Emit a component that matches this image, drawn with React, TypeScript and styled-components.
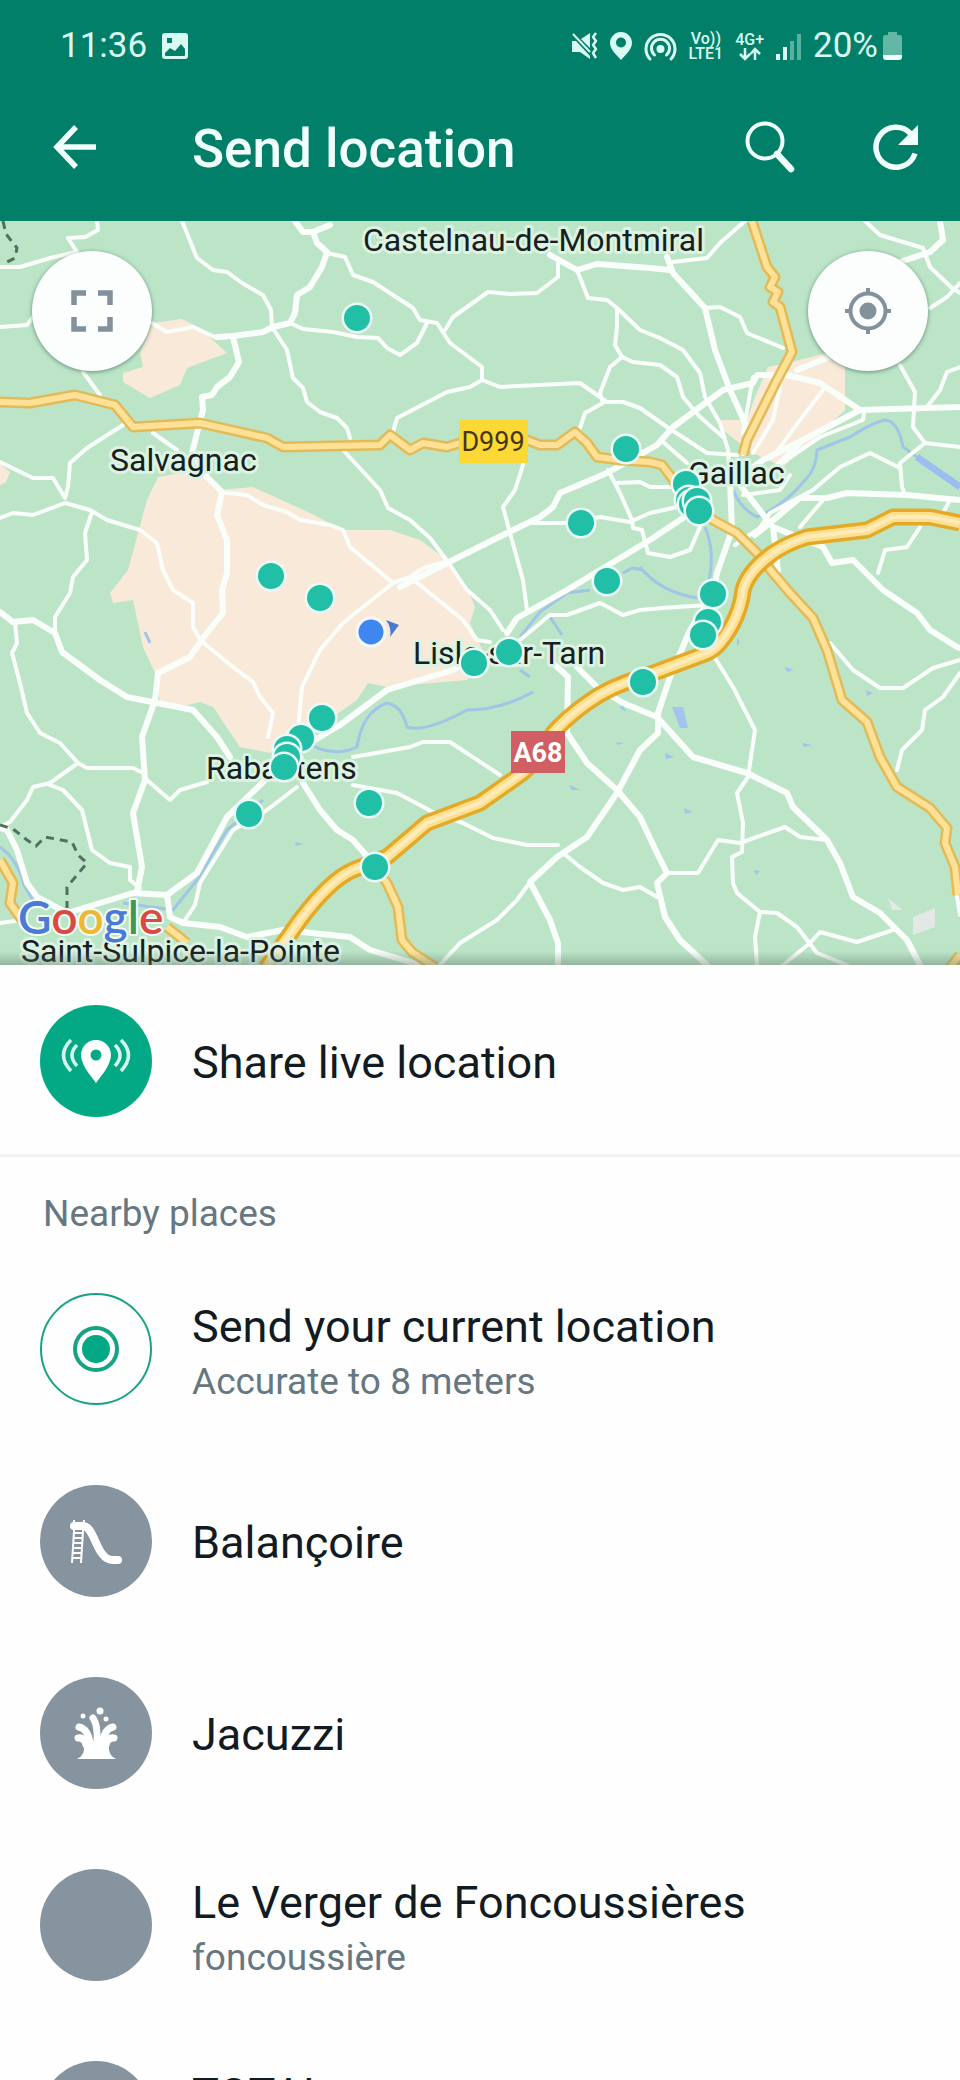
import React from "react";
import styled, { createGlobalStyle, css } from "styled-components";

const GlobalStyle = createGlobalStyle`
  * { box-sizing: border-box; }
  body {
    margin: 0;
    background: #fefefe;
    font-family: Roboto, "Liberation Sans", sans-serif;
  }
  svg { display: block; }
`;

const Screen = styled.div`
  display: flex;
  flex-direction: column;
  height: 100vh;
  overflow: hidden;
`;

/* ---------- header ---------- */

const Header = styled.header`
  flex: none;
  background: #027f69;
  color: #f0fffb;
`;

const StatusBar = styled.div`
  display: flex;
  align-items: center;
  justify-content: space-between;
  height: 92px;
  padding: 0 58px 0 60px;
  color: #d9faf2;
`;

const StatusGroup = styled.div<{ $gap: number }>`
  display: flex;
  align-items: center;
  gap: ${(p) => p.$gap}px;
`;

const StatusText = styled.span`
  font-size: 35px;
  line-height: 44px;
`;

const BatteryGroup = styled.div`
  display: flex;
  align-items: center;
  gap: 5px;
`;

const NetworkLabel = styled.span`
  display: flex;
  flex-direction: column;
  align-items: center;
  font-size: 16px;
  line-height: 15px;
  font-weight: 500;
`;

const AppBar = styled.div`
  display: flex;
  align-items: center;
  height: 129px;
  padding: 0 36px 20px 46px;
`;

const IconButton = styled.button`
  display: flex;
  align-items: center;
  justify-content: center;
  width: 58px;
  height: 58px;
  padding: 0;
  border: 0;
  background: none;
  color: inherit;
`;

const Title = styled.h1`
  flex: 1;
  margin: 0 0 0 88px;
  padding-top: 4px;
  font-size: 53px;
  line-height: 60px;
  font-weight: 500;
`;

const Actions = styled.div`
  display: flex;
  gap: 68px;
`;

/* ---------- map ---------- */

const MapArea = styled.section`
  position: relative;
  flex: none;
  height: 744px;
  overflow: hidden;
  background: #bce5c8;
`;

const MapCanvas = styled.svg`
  width: 100%;
  height: 100%;
`;

const MapButton = styled.button<{ $side: "left" | "right" }>`
  position: absolute;
  top: 30px;
  ${(p) =>
    p.$side === "left"
      ? css`
          left: 32px;
        `
      : css`
          right: 32px;
        `}
  display: flex;
  align-items: center;
  justify-content: center;
  width: 120px;
  height: 120px;
  padding: 0;
  border: 0;
  border-radius: 50%;
  background: #fbfefd;
  box-shadow: 0 1px 4px rgba(40, 80, 60, 0.6);
  color: #83919c;
`;

const MapLabel = styled.text`
  font-size: 32px;
  fill: #16201d;
  stroke: #dcf2e2;
  stroke-width: 6px;
  stroke-linejoin: round;
  paint-order: stroke;
`;

const ShieldText = styled.text`
  font-size: 27px;
  text-anchor: middle;
`;

const LogoText = styled.text`
  font-family: Lato, sans-serif;
  font-size: 46px;
  font-weight: 600;
  stroke: #f4fbf6;
  stroke-width: 4px;
  stroke-linejoin: round;
  paint-order: stroke;
`;

/* ---------- list ---------- */

const Content = styled.main`
  flex: 1;
  min-height: 0;
  overflow-y: auto;
  scrollbar-width: none;
`;

const PlaceList = styled.ul`
  margin: 0;
  padding: 0;
  list-style: none;
`;

const RowButton = styled.button<{ $divider?: boolean }>`
  display: flex;
  align-items: center;
  gap: 40px;
  width: 100%;
  height: 192px;
  padding: 0 40px;
  border: 0;
  background: none;
  box-shadow: ${(p) => (p.$divider ? "inset 0 -3px #f1f3f3" : "none")};
  font-family: inherit;
  text-align: left;
`;

const Avatar = styled.span<{ $tone: "live" | "current" | "place" }>`
  flex: none;
  width: 112px;
  height: 112px;
  border-radius: 50%;
  background: ${(p) =>
    p.$tone === "live" ? "#03a884" : p.$tone === "place" ? "#8694a0" : "none"};
  color: #fff;
`;

const RowText = styled.span`
  display: flex;
  flex-direction: column;
  padding-top: 3px;
`;

const Name = styled.span`
  font-size: 45px;
  line-height: 62px;
  color: #111b21;
`;

const Detail = styled.span`
  min-height: 48px;
  font-size: 37px;
  line-height: 48px;
  color: #667781;
`;

const SectionTitle = styled.h2`
  margin: 0;
  padding: 33px 43px 15px;
  font-size: 37px;
  line-height: 48px;
  font-weight: 400;
  color: #667781;
`;

/* ---------- map data ---------- */

const minorRoads = [
  "M182 221L197 258L213 270L227 272L242 283L263 295L271 310L272 327L287 350L293 378L303 388L307 402L320 412L337 418L347 428L350 438",
  "M0 267L20 267L50 258L77 252L68 238L85 237L98 230L97 221",
  "M0 327L27 325L33 317M152 323L167 332L193 327L217 338M83 372L100 395",
  "M290 323L303 329L333 332L357 337L378 338L387 348L400 355L417 343L427 323",
  "M123 425L87 448L70 463L68 487L65 498L53 478L33 478L0 462",
  "M0 518L13 513L33 515L65 503L90 510L107 520L140 530L157 543L163 570L173 590L193 603L193 627L200 640",
  "M92 512L85 533L87 560L73 577L70 593L55 617L55 633",
  "M153 433L177 450M227 493L247 495L263 505L287 512L300 520L330 525L343 530L350 547L393 583L343 623L320 650L302 687L298 730",
  "M393 583L410 577L463 620L477 640L490 642M410 577L423 568L453 560",
  "M320 245L327 253L345 257L353 275L373 282L413 308L420 320L437 323L450 343L482 367L482 380L470 387L447 392L397 418L393 432",
  "M482 380L500 387L580 383L607 402L623 402L640 408L667 427L707 453L737 455",
  "M445 330L453 317L488 292L510 294L537 293L558 277L558 262",
  "M577 270L583 285L588 298L607 300L617 308L617 327L615 345L622 357L610 367L600 393L603 403L585 413L580 428",
  "M617 308L640 330L660 338L683 350L700 373L705 397L720 423L728 450L730 480",
  "M622 357L633 362L660 365L677 377L683 397L700 417L723 437",
  "M343 450L380 490L388 508L410 520L430 538L448 562L467 590L490 610L503 630",
  "M523 465L515 490L503 507L510 533L523 580L527 610",
  "M533 523L567 523L600 517L630 522L650 513L677 507",
  "M608 470L620 493L632 520L633 528L642 530L648 553L670 557L690 550L700 527M617 483L640 482L650 487L673 487",
  "M745 221L720 243L707 258L673 262M705 308L720 307L740 317L747 333L783 348",
  "M865 221L880 235L923 248L930 267L952 288L960 293M960 283L947 297L930 308",
  "M900 365L915 392L913 427L925 443L960 447M960 367L947 372L940 390L927 407",
  "M925 443L900 463L902 487L905 495M900 468L870 453L840 467L813 490L770 513L755 535",
  "M823 500L800 527M864 412L863 420L820 437L783 462M753 377L743 433M780 387L773 420L753 453M823 390L800 420L778 450M663 442L687 463",
  "M920 527L907 547L885 550L878 573M950 500L943 513M735 545L757 530L775 520L785 510M743 495L780 490L790 475",
  "M15 623L17 643L12 653L20 683L27 713L40 733L60 743L78 763L87 768L133 768L143 773",
  "M78 763L50 783L33 787L27 800L10 822L0 827M50 785L63 790L82 810L92 850L110 863L130 867L130 880L140 888",
  "M147 780L170 800L180 790L207 782M200 640L233 667L253 682L260 697L273 713L268 737",
  "M297 787L267 810L233 830L200 883L195 905L183 923M0 923L22 920",
  "M353 785L397 793L433 812L463 823L493 838L527 845L558 845M353 757L410 747L423 742L450 742L500 775",
  "M520 640L550 615L567 615L600 603L623 615L640 610L663 608L707 605",
  "M530 882L517 900L497 920L460 943L447 957L440 965M563 853L580 867L603 883L623 890L640 887L657 897",
  "M715 658L733 687L755 730L748 777L737 793L743 823L742 852L732 857L733 883L737 893L760 912L755 937L757 965",
  "M667 873L698 873L718 840L740 843L785 827L800 837L827 840",
  "M760 912L777 913L797 927L817 953L847 965M783 965L810 943L820 932L857 942L893 930",
  "M830 643L853 670L880 688L903 688L933 668L960 660M960 673L943 697L925 710L922 730L902 750L897 770M957 897L960 915",
];

const mainRoads = [
  "M295 221L303 232L313 232L330 225M313 232L317 243L327 252L322 267L310 287L297 295L295 313L290 323L273 327L263 332L233 336L217 337",
  "M233 337L239 362L230 377L217 387L212 395L202 397L203 410L197 433L192 453L207 477L222 492L217 515L227 540L227 573L222 590L223 613L203 638L190 657L158 673L155 700L142 737L145 780L133 813L142 867L137 892",
  "M400 587L453 560L507 533L540 517L553 507L560 493L607 473L657 445L673 427L723 390L753 383L757 375L787 375L820 383L860 410L960 407",
  "M550 255L577 270L597 264L650 268L670 270M667 257L673 273L705 308L715 350L730 390L747 427L743 453",
  "M940 221L943 240L930 252L900 262M797 370L827 358L850 345",
  "M507 633L517 618L567 590L650 540L683 518",
  "M860 410L803 440L763 460L743 475M803 440L778 465M730 480L732 530L717 573L713 594L690 630L670 677L658 713L658 733L640 750L617 793L587 837L557 857L530 882L550 920L558 943L558 965",
  "M740 485L773 527L823 547L832 563L853 560L883 590L917 613L930 630L957 647L960 648M773 527L778 570M755 535L800 498L827 498L847 493L907 495L960 500",
  "M0 612L13 622L33 620L55 633L62 652L100 680L127 697L157 703L193 710L217 737L230 757",
  "M0 828L7 830L17 850L27 883L37 897L67 913L133 893L167 895L197 873L227 817L260 785L290 755L340 725L387 690L453 670L480 655",
  "M167 895L170 917L183 923L220 927L247 937L283 930L350 937L370 950L420 965",
  "M303 783L320 810L337 830L353 840L372 862",
  "M553 663L568 677L567 733L587 763L617 790L640 817L657 853L667 873L657 883L665 917L680 940L707 965",
  "M577 667L597 687L623 703L657 717L693 757L747 773L787 793L793 807L827 840L840 863L853 897L880 913L907 940L920 965",
];

const departmentRoads = [
  "M0 402L30 403L75 395L115 405L133 427L200 423L267 438L283 447L380 445L390 435L410 450L423 443L447 447L460 443L527 440L540 445L557 445L575 432L587 443L597 457L620 460L650 462L662 465L672 478L682 497L713 520L737 533L757 553L773 573L790 593L813 618L827 650L842 700L867 722L880 757L897 787L930 808L947 828L945 843L955 867L958 895",
  "M752 221L767 267L775 277L770 287L778 292L773 302L780 307L792 352L777 380L747 440L743 455",
  "M375 867L387 883L398 907L402 940L412 952L435 967",
  "M0 860L13 883L10 903L22 920",
  "M167 927L187 943M948 970L960 955",
];

const motorway =
  "M960 523L930 517L893 517L867 530L807 537Q788 543 773 553Q748 571 743 590Q740 618 720 643Q714 650 707 653L643 677Q610 686 587 703Q566 718 553 733Q538 763 517 777L480 803L427 823L387 857L353 870Q330 880 300 920L266 968";

const rivers = [
  "M960 487L917 457L903 447Q898 420 884 420Q870 424 850 437L817 450Q816 470 805 480Q785 505 757 517Q740 508 733 490",
  "M705 527Q716 553 708 585M640 567Q660 592 697 598M623 573L632 568L643 570",
  "M300 738Q330 760 357 747Q362 712 387 703Q402 706 407 727Q425 733 467 710Q500 710 533 692",
  "M520 637L540 612L567 593L590 590M550 617L562 635M520 670L530 677",
  "M263 800L227 830L197 880L173 910L123 903M0 847Q18 860 24 885L33 900M145 632L150 643",
];

const urbanAreas = [
  "M158 477L147 500L137 537L128 570L110 593L113 603L133 600L143 647L155 673L160 702L180 707L200 702L213 707L240 747L270 753L300 740L340 712L357 700L368 683L387 687L467 680L487 660L470 623L475 607L468 590L447 560L420 540L390 530L343 530L310 513L253 487L220 490L200 470Z",
  "M153 323L182 319L200 328L227 353L187 368L180 385L150 398L123 382L123 373L143 367L140 353Z",
  "M768 367L783 364L827 353L845 367L845 410L783 467L753 453L720 428L722 420L747 420L755 397Z",
  "M0 464L10 472L6 482L0 485Z",
];

const lakes = [
  "M672 707L683 707L688 728L680 728Z",
  "M665 753L674 757L666 759Z",
  "M684 808L693 812L685 814Z",
  "M785 667L794 670L787 672Z",
  "M570 785L580 790L571 790Z",
  "M622 703L626 712L620 708Z",
  "M754 870L760 871L756 875Z",
  "M295 842L304 844L296 846Z",
  "M802 743L812 745L804 747Z",
  "M616 742L624 743L618 745Z",
  "M866 690L873 693L867 696Z",
  "M737 638L740 642L737 646Z",
];

const boundaries = [
  "M3 221L6 234L17 248L15 258L5 263",
  "M0 825L13 829L27 840L36 846L45 837L72 842L78 855L87 863L67 887L67 908",
];

const mapLabels = [
  { name: "Castelnau-de-Montmiral", x: 363, y: 251 },
  { name: "Salvagnac", x: 110, y: 471 },
  { name: "Gaillac", x: 688, y: 484 },
  { name: "Lisle-sur-Tarn", x: 413, y: 664 },
  { name: "Rabastens", x: 206, y: 779 },
  { name: "Saint-Sulpice-la-Pointe", x: 21, y: 962 },
];

const places: [number, number][] = [
  [357, 318], [626, 449], [581, 523], [607, 581], [271, 576], [320, 598],
  [686, 484], [689, 500], [692, 504], [697, 501], [699, 511],
  [713, 594], [708, 622], [703, 635], [643, 682],
  [474, 663], [509, 652], [369, 803], [375, 867],
  [322, 718], [301, 738], [287, 749], [287, 757], [284, 767], [249, 814],
];

const logoLetters = [
  ["G", "#4a7bd4"],
  ["o", "#d94b41"],
  ["o", "#edb833"],
  ["g", "#4a7bd4"],
  ["l", "#3c9a57"],
  ["e", "#d94b41"],
];

function LocationMap() {
  return (
    <MapCanvas viewBox="0 221 960 744" preserveAspectRatio="xMidYMid slice" role="img" aria-label="Map">
      <defs>
        <linearGradient id="edge" x1="0" y1="0" x2="0" y2="1">
          <stop offset="0" stopColor="#5f7a6b" stopOpacity="0" />
          <stop offset="1" stopColor="#5f7a6b" stopOpacity="0.45" />
        </linearGradient>
      </defs>
      <g fill="#f9e9d8">
        {urbanAreas.map((d) => <path key={d} d={d} />)}
      </g>
      <path d="M913 917L935 908L935 927L913 935ZM888 898L903 910L892 910Z" fill="#e3e8e6" />
      <g fill="#a3c4ee">
        {lakes.map((d) => <path key={d} d={d} />)}
      </g>
      <g fill="none" stroke="#a0c5e6" strokeWidth="3" strokeLinejoin="round">
        {rivers.map((d) => <path key={d} d={d} />)}
        <path d="M960 487L917 457" stroke="#9bbdf0" strokeWidth="7" />
      </g>
      <g fill="none" stroke="#fafefa" strokeLinejoin="round" strokeLinecap="round">
        {minorRoads.map((d) => <path key={d} d={d} strokeWidth="4" />)}
        {mainRoads.map((d) => <path key={d} d={d} strokeWidth="6" />)}
      </g>
      <g fill="none" stroke="#4d7060" strokeWidth="3" strokeDasharray="8 6">
        {boundaries.map((d) => <path key={d} d={d} />)}
      </g>
      <g fill="none" strokeLinejoin="round">
        {departmentRoads.map((d) => <path key={d} d={d} stroke="#e2bb58" strokeWidth="11" />)}
        {departmentRoads.map((d) => <path key={d} d={d} stroke="#fee196" strokeWidth="6" />)}
        <path d={motorway} stroke="#e3a927" strokeWidth="17" />
        <path d={motorway} stroke="#fde08c" strokeWidth="10" />
        <path d={motorway} stroke="#fdebbd" strokeWidth="4" />
      </g>

      {mapLabels.map((l) => (
        <MapLabel key={l.name} x={l.x} y={l.y}>{l.name}</MapLabel>
      ))}
      <rect x="459" y="420" width="69" height="43" rx="2" fill="#fcd835" />
      <ShieldText x="493" y="451" fill="#46360d">D999</ShieldText>
      <rect x="511" y="731" width="54" height="42" fill="#d05e63" />
      <ShieldText x="538" y="762" fill="#fff" fontWeight="700">A68</ShieldText>
      <LogoText x="18" y="934">
        {logoLetters.map(([letter, color], i) => (
          <tspan key={i} fill={color}>{letter}</tspan>
        ))}
      </LogoText>

      {places.map(([x, y]) => (
        <g key={`${x}-${y}`}>
          <circle cx={x} cy={y} r="15.5" fill="#eafbf7" />
          <circle cx={x} cy={y} r="13" fill="#20bfa6" />
        </g>
      ))}
      <circle cx="371" cy="632" r="15.5" fill="#f0f8fd" />
      <circle cx="371" cy="632" r="12.5" fill="#3f86f0" />
      <path d="M386 620L399 625L390 637Q392 628 386 620Z" fill="#4c7ad0" />
      <rect x="0" y="951" width="960" height="14" fill="url(#edge)" />
    </MapCanvas>
  );
}

/* ---------- icons ---------- */

const PictureIcon = () => (
  <svg width="26" height="26" viewBox="0 0 26 26">
    <path fill="currentColor" fillRule="evenodd" d="M3 0H23Q26 0 26 3V23Q26 26 23 26H3Q0 26 0 23V3Q0 0 3 0ZM3 22Q3 23 4 23H22Q23 23 23 22V16L19 11L13 18L8 15L3 20ZM5 5V10H10V5Z" />
  </svg>
);

const VibrateIcon = () => (
  <svg width="27" height="28" viewBox="0 0 27 28">
    <path fill="currentColor" d="M1 9H5L19 24V27L9 20H1ZM10 7L19 1V16Z" />
    <path d="M2 2L19 20" stroke="currentColor" strokeWidth="2" />
    <path d="M25 1L22 5L25 9L22 13L25 17L22 21L25 26" fill="none" stroke="currentColor" strokeWidth="2.5" strokeLinejoin="round" />
  </svg>
);

const StatusPinIcon = () => (
  <svg width="22" height="28" viewBox="0 0 22 28">
    <path fill="currentColor" fillRule="evenodd" d="M11 0A11 11 0 0 1 22 11C22 18 14 24 11 28C8 24 0 18 0 11A11 11 0 0 1 11 0ZM11 5.500A5 5 0 1 0 11 15.500A5 5 0 1 0 11 5.500Z" />
  </svg>
);

const HotspotIcon = () => (
  <svg width="33" height="29" viewBox="0 0 33 29">
    <g fill="none" stroke="currentColor" strokeWidth="3" strokeLinecap="round">
      <path d="M6 27A14.500 14.500 0 1 1 27 27" />
      <path d="M10.500 23A9 9 0 1 1 22.500 23" />
    </g>
    <circle cx="16.500" cy="17" r="4" fill="currentColor" />
  </svg>
);

const DataArrowsIcon = () => (
  <svg width="22" height="14" viewBox="0 0 22 14">
    <path d="M6 1V12M1 7L6 12L11 7M16 13V2M11.500 7L16 2L21 7" fill="none" stroke="currentColor" strokeWidth="2.500" />
  </svg>
);

const SignalIcon = () => (
  <svg width="25" height="27" viewBox="0 0 25 27" fill="currentColor">
    <rect x="0" y="21" width="4" height="6" />
    <rect x="7" y="14" width="4" height="13" />
    <rect x="14" y="8" width="4" height="19" opacity="0.4" />
    <rect x="21" y="1" width="4" height="26" opacity="0.4" />
  </svg>
);

const BatteryIcon = () => (
  <svg width="19" height="28" viewBox="0 0 19 28">
    <path d="M5 0H14V3H17Q19 3 19 6V23H0V6Q0 3 2 3H5Z" fill="#62b8a5" />
    <path d="M0 23H19V25Q19 28 16 28H3Q0 28 0 25Z" fill="#f0fffb" />
  </svg>
);

const BackIcon = () => (
  <svg width="44" height="44" viewBox="0 0 44 44">
    <path d="M43 22H5M23 2L4 22L23 42" fill="none" stroke="currentColor" strokeWidth="5.500" />
  </svg>
);

const SearchIcon = () => (
  <svg width="52" height="54" viewBox="0 0 52 54">
    <circle cx="22" cy="21" r="17.500" fill="none" stroke="currentColor" strokeWidth="4" />
    <path d="M34 34L48 49" stroke="currentColor" strokeWidth="6.500" strokeLinecap="round" />
  </svg>
);

const RefreshIcon = () => (
  <svg width="46" height="46" viewBox="0 0 46 46">
    <path d="M38.500 9.500A20 20 0 1 0 43 29.500" fill="none" stroke="currentColor" strokeWidth="5.500" />
    <path d="M46 1V21H26Z" fill="currentColor" />
  </svg>
);

const ExpandIcon = () => (
  <svg width="42" height="42" viewBox="0 0 42 42">
    <path d="M3 15V3H15M27 3H39V15M39 27V39H27M15 39H3V27" fill="none" stroke="currentColor" strokeWidth="5.500" />
  </svg>
);

const TargetIcon = () => (
  <svg width="48" height="48" viewBox="0 0 48 48">
    <g fill="none" stroke="currentColor" strokeWidth="4">
      <circle cx="24" cy="24" r="17.500" />
      <path d="M24 1V8M24 40V47M1 24H8M40 24H47" />
    </g>
    <circle cx="24" cy="24" r="8.500" fill="currentColor" />
  </svg>
);

const LiveIcon = () => (
  <svg width="112" height="112" viewBox="0 0 112 112">
    <path fill="currentColor" fillRule="evenodd" d="M56 35A15 15 0 0 1 71 50C71 60 61 71 56 78C51 71 41 60 41 50A15 15 0 0 1 56 35ZM56 44.500A5.500 5.500 0 1 0 56 55.500A5.500 5.500 0 1 0 56 44.500Z" />
    <g fill="none" stroke="#d3f5ec" strokeWidth="3.500">
      <path d="M37 40Q27 50 37 61M31 35Q16 50 31 66M75 40Q85 50 75 61M81 35Q96 50 81 66" />
    </g>
  </svg>
);

const CurrentIcon = () => (
  <svg width="112" height="112" viewBox="0 0 112 112">
    <g fill="none" stroke="#18a284">
      <circle cx="56" cy="56" r="55" strokeWidth="2" />
      <circle cx="56" cy="56" r="21" strokeWidth="4" />
    </g>
    <circle cx="56" cy="56" r="14" fill="#03a884" />
  </svg>
);

const SlideIcon = () => (
  <svg width="112" height="112" viewBox="0 0 112 112">
    <g fill="none" stroke="currentColor">
      <path d="M34 35V46L32 78M44 35L43 46L41 78" strokeWidth="2" />
      <path d="M33 48H42M33 53H42M33 58H42M32 63H42M32 68H41M32 73H41" strokeWidth="2" />
      <path d="M34 41H43C55 41 56 75 73 75H78" strokeWidth="8" strokeLinecap="round" />
    </g>
  </svg>
);

const FountainIcon = () => (
  <svg width="112" height="112" viewBox="0 0 112 112">
    <path d="M37 82Q46 78 44 64H69Q67 78 76 82Z" fill="currentColor" />
    <g fill="none" stroke="currentColor" strokeWidth="7" strokeLinecap="round">
      <path d="M57 66Q58 48 53 41M50 66Q48 52 39 50M63 66Q64 52 73 50M46 68Q44 60 38 61M66 68Q68 60 74 61" />
    </g>
    <g fill="currentColor">
      <circle cx="43" cy="39" r="2.500" />
      <circle cx="60" cy="34" r="3.500" />
      <circle cx="66" cy="42" r="2.500" />
    </g>
  </svg>
);

/* ---------- rows ---------- */

type RowProps = {
  name: string;
  detail?: string;
  tone: "live" | "current" | "place";
  icon?: React.ReactNode;
  divider?: boolean;
};

function Row({ name, detail, tone, icon, divider }: RowProps) {
  return (
    <RowButton type="button" $divider={divider}>
      <Avatar $tone={tone}>{icon}</Avatar>
      <RowText>
        <Name>{name}</Name>
        {detail !== undefined && <Detail>{detail}</Detail>}
      </RowText>
    </RowButton>
  );
}

const nearby: RowProps[] = [
  { name: "Send your current location", detail: "Accurate to 8 meters", tone: "current", icon: <CurrentIcon /> },
  { name: "Balançoire", tone: "place", icon: <SlideIcon /> },
  { name: "Jacuzzi", tone: "place", icon: <FountainIcon /> },
  { name: "Le Verger de Foncoussières", detail: "foncoussière", tone: "place" },
  { name: "TOTAL", detail: "", tone: "place" },
];

export default function App() {
  return (
    <Screen>
      <GlobalStyle />
      <Header>
        <StatusBar>
          <StatusGroup $gap={15}>
            <StatusText>11:36</StatusText>
            <PictureIcon />
          </StatusGroup>
          <StatusGroup $gap={12}>
            <VibrateIcon />
            <StatusPinIcon />
            <HotspotIcon />
            <NetworkLabel>
              <span>Vo))</span>
              <span>LTE1</span>
            </NetworkLabel>
            <NetworkLabel>
              <span>4G+</span>
              <DataArrowsIcon />
            </NetworkLabel>
            <SignalIcon />
            <BatteryGroup>
              <StatusText>20%</StatusText>
              <BatteryIcon />
            </BatteryGroup>
          </StatusGroup>
        </StatusBar>
        <AppBar>
          <IconButton type="button" aria-label="Back"><BackIcon /></IconButton>
          <Title>Send location</Title>
          <Actions>
            <IconButton type="button" aria-label="Search"><SearchIcon /></IconButton>
            <IconButton type="button" aria-label="Refresh"><RefreshIcon /></IconButton>
          </Actions>
        </AppBar>
      </Header>

      <MapArea>
        <LocationMap />
        <MapButton type="button" $side="left" aria-label="Full screen"><ExpandIcon /></MapButton>
        <MapButton type="button" $side="right" aria-label="My location"><TargetIcon /></MapButton>
      </MapArea>

      <Content>
        <Row name="Share live location" tone="live" icon={<LiveIcon />} divider />
        <SectionTitle>Nearby places</SectionTitle>
        <PlaceList>
          {nearby.map((place) => (
            <li key={place.name}><Row {...place} /></li>
          ))}
        </PlaceList>
      </Content>
    </Screen>
  );
}
